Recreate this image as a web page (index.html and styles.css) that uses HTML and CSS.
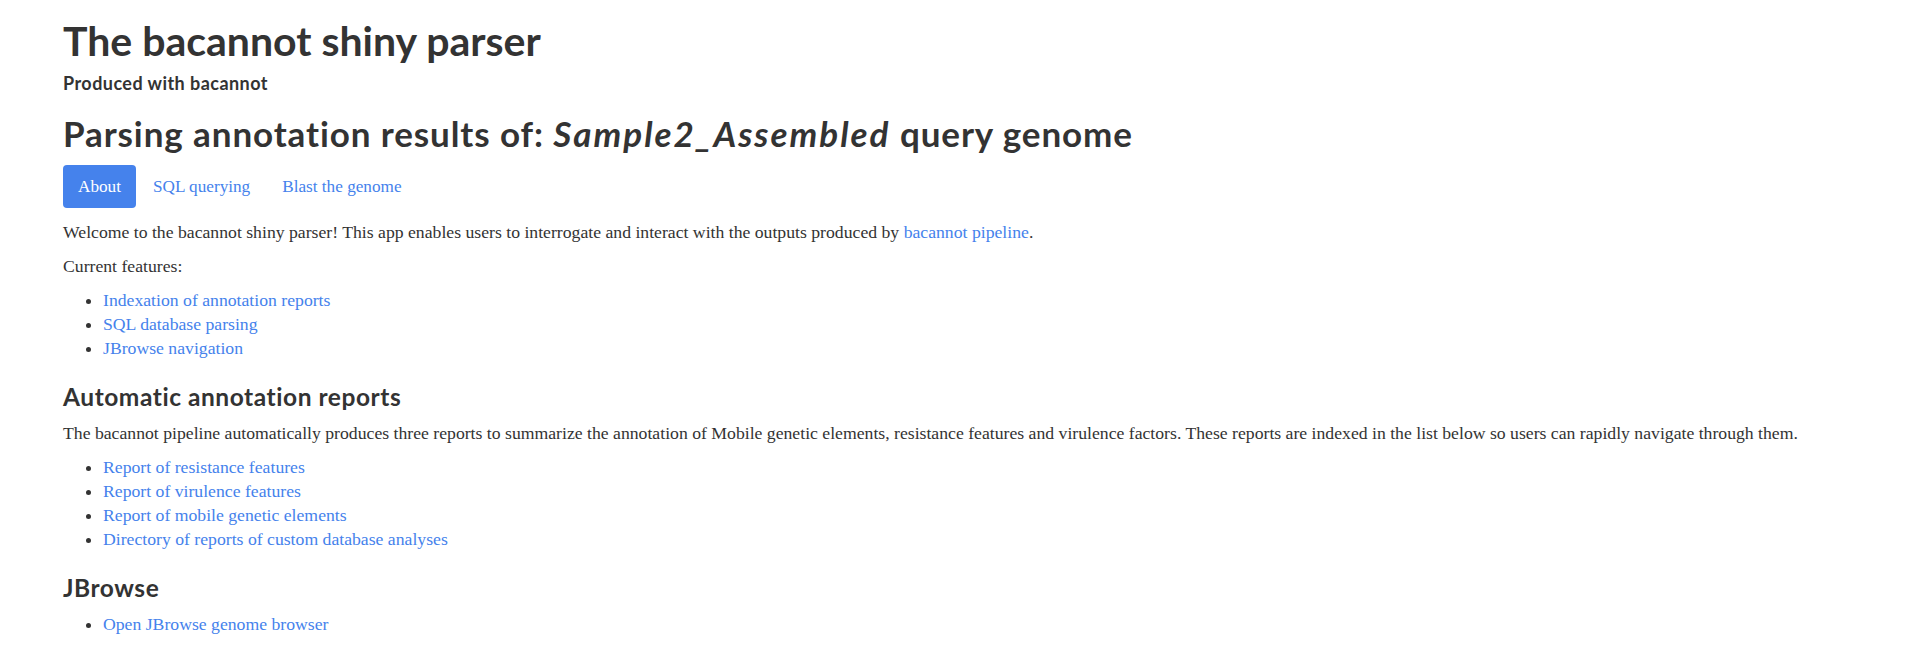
FILE: index.html
```html
<!DOCTYPE html>
<html lang="en">
<head>
<meta charset="utf-8">
<title>The bacannot shiny parser</title>
<link rel="stylesheet" href="styles.css">
</head>
<body>
<div class="container">
  <h1 class="title">The bacannot shiny parser</h1>
  <h4 class="subtitle">Produced with bacannot</h4>
  <h2 class="parsing">Parsing annotation results of: <em>Sample2_Assembled</em> query genome</h2>
  <ul class="nav-pills">
    <li><a class="pill active" href="#">About</a></li>
    <li><a class="pill" href="#">SQL querying</a></li>
    <li><a class="pill" href="#">Blast the genome</a></li>
  </ul>
  <div class="tab-content">
    <p>Welcome to the bacannot shiny parser! This app enables users to interrogate and interact with the outputs produced by <a href="#">bacannot pipeline</a>.</p>
    <p>Current features:</p>
    <ul class="links">
      <li><a href="#">Indexation of annotation reports</a></li>
      <li><a href="#">SQL database parsing</a></li>
      <li><a href="#">JBrowse navigation</a></li>
    </ul>
    <h3 class="section">Automatic annotation reports</h3>
    <p class="oneline">The bacannot pipeline automatically produces three reports to summarize the annotation of Mobile genetic elements, resistance features and virulence factors. These reports are indexed in the list below so users can rapidly navigate through them.</p>
    <ul class="links">
      <li><a href="#">Report of resistance features</a></li>
      <li><a href="#">Report of virulence features</a></li>
      <li><a href="#">Report of mobile genetic elements</a></li>
      <li><a href="#">Directory of reports of custom database analyses</a></li>
    </ul>
    <h3 class="section">JBrowse</h3>
    <ul class="links">
      <li><a href="#">Open JBrowse genome browser</a></li>
    </ul>
  </div>
</div>
</body>
</html>
```
FILE: styles.css
```css
body {
  margin: 0;
  font-family: "Liberation Serif", Georgia, serif;
  font-size: 17.7px;
  line-height: 24px;
  color: #333333;
  background: #ffffff;
}
.container {
  padding: 0 20px 0 63px;
}
a {
  color: #4582ec;
  text-decoration: none;
}
h1, h2, h3, h4 {
  font-family: Lato, "Open Sans", sans-serif;
  font-weight: 700;
  color: #333333;
  line-height: 1.1;
}
.title {
  font-size: 41px;
  margin: 18px 0 11px;
}
.subtitle {
  font-size: 18px;
  letter-spacing: 0.45px;
  margin: 0;
}
.parsing {
  font-size: 35px;
  letter-spacing: 0.9px;
  margin: 20px 0 12.5px;
}
.parsing em {
  font-style: italic;
  letter-spacing: 2px;
}
.section {
  font-size: 24.5px;
  letter-spacing: 0.55px;
  margin: 24px 0 10px;
}
p {
  margin: 0 0 10px;
}
.oneline {
  white-space: nowrap;
}
.nav-pills {
  list-style: none;
  margin: 0;
  padding: 0;
  display: flex;
}
.nav-pills li + li {
  margin-left: 2px;
}
.pill {
  display: block;
  padding: 10px 15px;
  border-radius: 4px;
  font-size: 17.2px;
  line-height: 23px;
}
.pill.active {
  background: #4582ec;
  color: #ffffff;
}
.tab-content {
  padding-top: 12px;
}
.links {
  margin: 0 0 10px;
  padding-left: 40px;
}
```
